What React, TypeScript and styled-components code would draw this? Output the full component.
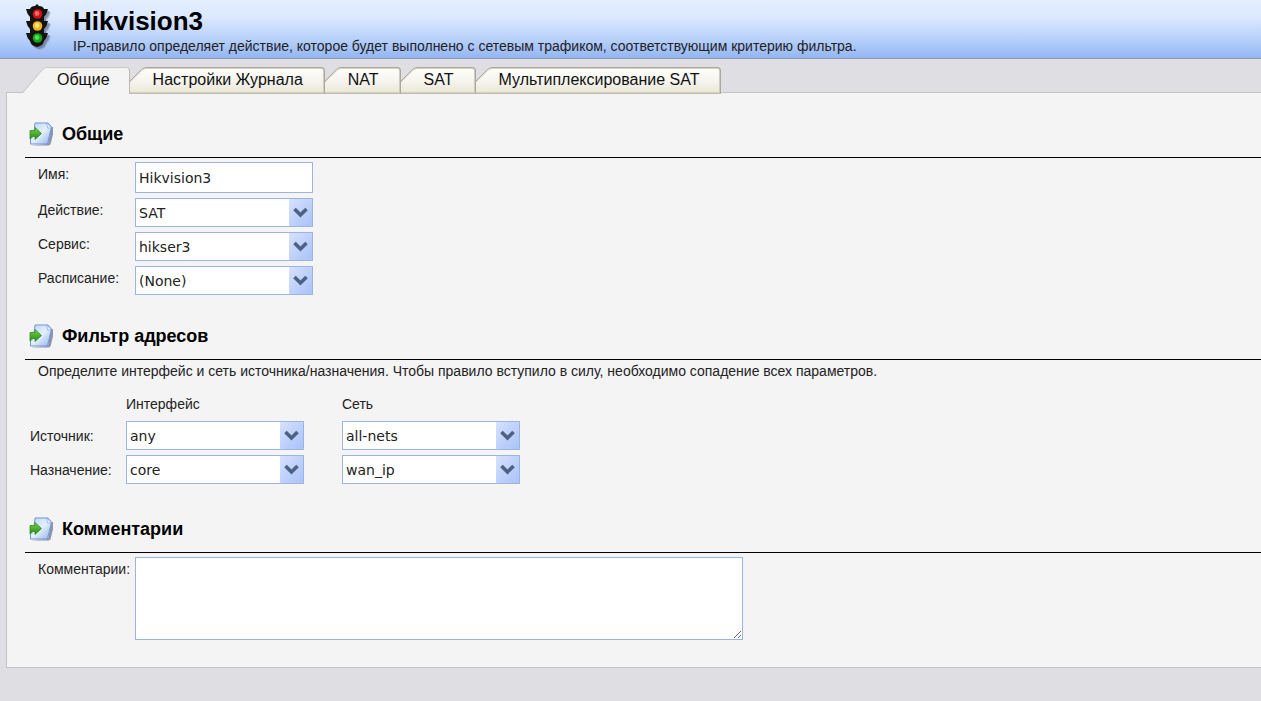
import React, { useState } from "react";
import styled, { createGlobalStyle, css } from "styled-components";

const GlobalStyle = createGlobalStyle`
  * { box-sizing: border-box; }
  body {
    margin: 0;
    background: #dfdee3;
    color: #222;
    font-family: "Liberation Sans", Arial, sans-serif;
    font-size: 14px;
    line-height: 16px;
    overflow-x: hidden;
  }
`;

const Header = styled.header`
  display: flex;
  height: 59px;
  padding: 4px 0 0 24px;
  gap: 21px;
  border-bottom: 1px solid #8f9bb5;
  background: linear-gradient(#e4efff, #dbe8fe 30%, #b5cffb 70%, #94b5f3);
`;

const HeaderText = styled.div`
  display: flex;
  flex-direction: column;
`;

const Title = styled.h1`
  margin: 0;
  color: #000;
  font-size: 26px;
  line-height: 34px;
  font-weight: bold;
`;

const Subtitle = styled.p`
  margin: 0;
`;

const TabBar = styled.nav`
  display: flex;
  padding: 8px 0 0 22px;
  height: 34px;
  margin-bottom: -1px;
  position: relative;
`;

const TabLink = styled.a`
  display: flex;
  height: 27px;
  color: #111;
  font-size: 16px;
  line-height: 24px;
  text-decoration: none;
  white-space: nowrap;
`;

const TabEdge = styled.svg`
  display: block;
  flex: none;
`;

const TabBody = styled.span<{ $active?: boolean }>`
  border-radius: 0 4px 0 0;
  ${(p) =>
    p.$active
      ? css`
          padding: 0 19px 0 11px;
          border-top: 1px solid #c9c9c4;
          border-right: 1px solid #b9b9b0;
          background: #f4f4f4;
        `
      : css`
          padding: 0 21px 0 7px;
          border: solid #aaa89c;
          border-width: 1px 1px 1px 0;
          border-bottom-color: #c0bdae;
          box-shadow: inset -1px 0 #cfcdc2, inset 0 1px #d4d2c8, inset 0 -1px #d3d0c1;
          background: linear-gradient(#fefefc, #f6f5ef 50%, #eae7d6);
        `}
`;

const Panel = styled.main`
  margin-left: 6px;
  padding: 0 0 27px 18px;
  border: solid #c3c3c1;
  border-width: 1px 0 1px 1px;
  background: #f4f4f4;
`;

const SectionHeader = styled.div`
  display: flex;
  gap: 9px;
  padding: 29px 0 11px 4px;
  border-bottom: 1px solid #000;
`;

const SectionTitle = styled.h2`
  margin: 0;
  color: #000;
  font-size: 18px;
  line-height: 24px;
`;

const Fields = styled.div`
  display: flex;
  flex-direction: column;
  gap: 5px;
  padding: 4px 0 0 13px;
`;

const Field = styled.div`
  display: grid;
  grid-template-columns: 97px 1fr;
  align-items: start;
`;

const FieldLabel = styled.label`
  padding-top: 4px;
`;

const control = css`
  margin: 0;
  border: 1px solid #9ab5e4;
  border-radius: 0;
  background: #fff;
  color: #222;
  font-family: "DejaVu Sans", Verdana, sans-serif;
  font-size: 14px;
  outline: none;
`;

const TextInput = styled.input`
  ${control}
  width: 178px;
  height: 31px;
  padding: 0 3px;
`;

const CommentBox = styled.textarea`
  ${control}
  display: block;
  width: 608px;
  height: 83px;
  padding: 3px;
  resize: both;
`;

const SelectFrame = styled.div`
  display: grid;
  width: 178px;
  height: 29px;
  > * {
    grid-area: 1 / 1;
  }
`;

const NativeSelect = styled.select`
  ${control}
  appearance: none;
  width: 100%;
  height: 100%;
  padding: 0 26px 0 3px;
`;

const SelectArrow = styled.svg`
  align-self: center;
  justify-self: end;
  margin-right: 1px;
  pointer-events: none;
  z-index: 1;
`;

const FilterHint = styled.p`
  margin: 0;
  padding: 3px 0 0 13px;
`;

const FilterGrid = styled.div`
  display: grid;
  grid-template-columns: 96px 216px 178px;
  row-gap: 5px;
  align-items: center;
  padding: 17px 0 4px 5px;
`;

const ColumnTitle = styled.span`
  padding-bottom: 4px;
`;

const lamps = [
  { base: "#cf1018", shine: "#ff8f8f", y: 10 },
  { base: "#eeb51c", shine: "#fff2a8", y: 22 },
  { base: "#0fa517", shine: "#7df07d", y: 34 },
];

function TrafficLight() {
  const housing =
    "M13 0l2 2q4 0 5 3h4q-1 5-4 8v4h4q-1 5-4 8v4h4q-1 5-4 8-1 4-4 5l-3 1-3-1q-3-1-4-5-3-3-4-8h4v-4q-3-3-4-8h4v-4Q3 10 2 5h4q1-3 5-3z";
  return (
    <svg width="28" height="48" viewBox="0 0 28 48" aria-hidden="true">
      <path d={housing} fill="#66728c" opacity="0.3" transform="translate(3 3)" />
      <path d={housing} fill="#4c5670" opacity="0.45" transform="translate(2 2)" />
      <path d={housing} fill="#15130f" />
      {lamps.map(({ base, shine, y }) => (
        <g key={y}>
          <circle cx="13.5" cy={y} r="4.8" fill={base} />
          <circle cx="13" cy={y - 0.5} r="2.4" fill={shine} opacity="0.7" />
        </g>
      ))}
    </svg>
  );
}

function SectionIcon() {
  return (
    <svg width="24" height="24" viewBox="0 0 24 24" aria-hidden="true">
      <defs>
        <linearGradient id="sheet" x1="0" y1="0" x2="1" y2="1">
          <stop offset="0" stopColor="#b9d3f6" />
          <stop offset="0.5" stopColor="#e3effd" />
          <stop offset="1" stopColor="#8eb1e8" />
        </linearGradient>
        <linearGradient id="arrow" x1="0" y1="0" x2="0" y2="1">
          <stop offset="0" stopColor="#7fd24a" />
          <stop offset="1" stopColor="#1f8a12" />
        </linearGradient>
      </defs>
      <path d="M2 23.5h17.500l2-1L25 8V5h-3l-3 17z" fill="#5d6c90" opacity="0.7" />
      <path d="M6 1h13l3.500 4-4 17H1.500V15L5 10z" fill="url(#sheet)" stroke="#7395cf" />
      <path d="M17.500 1l1 5h4z" fill="#f4f9ff" stroke="#7da2dc" strokeWidth="0.7" />
      <path d="M1 8.500h5V5.500l6.500 6L6 17.500V14.500H4L1 17z" fill="url(#arrow)" stroke="#2f8d20" strokeWidth="0.8" />
    </svg>
  );
}

function Select({ id, value, label }: { id: string; value: string; label?: string }) {
  return (
    <SelectFrame>
      <NativeSelect id={id} defaultValue={value} aria-label={label}>
        <option>{value}</option>
      </NativeSelect>
      <SelectArrow width="23" height="27" viewBox="0 0 23 27" aria-hidden="true">
        <defs>
          <linearGradient id="drop" x1="0" y1="0" x2="1" y2="1">
            <stop offset="0" stopColor="#d6e1fd" />
            <stop offset="0.5" stopColor="#c0d2fb" />
            <stop offset="1" stopColor="#a9c2f7" />
          </linearGradient>
        </defs>
        <rect width="23" height="27" rx="1" fill="url(#drop)" />
        <path d="M5.500 10l6 6 6-6" fill="none" stroke="#4d6185" strokeWidth="3.6" />
      </SelectArrow>
    </SelectFrame>
  );
}

function Tab({ label, active }: { label: string; active?: boolean }) {
  return (
    <TabLink href="#" aria-current={active ? "page" : undefined}>
      {active ? (
        <TabEdge width="24" height="27" viewBox="0 0 24 27" aria-hidden="true">
          <path d="M0 27L2 25 18 5.500Q22 .5 24 .5V27z" fill="#f4f4f4" />
          <path d="M0 25.500L2 24 18 5.500Q22 .5 24 .5" fill="none" stroke="#c6c6c0" />
        </TabEdge>
      ) : (
        <TabEdge width="16" height="27" viewBox="0 0 16 27" aria-hidden="true">
          <defs>
            <linearGradient id="tab" x1="0" y1="0" x2="0" y2="1">
              <stop offset="0" stopColor="#fefefc" />
              <stop offset="0.5" stopColor="#f6f5ef" />
              <stop offset="1" stopColor="#eae7d6" />
            </linearGradient>
          </defs>
          <path d="M0 14L10 4Q13 .5 16 .5V27H0z" fill="url(#tab)" />
          <path d="M0 15L11 4.500Q13 1.500 16 1.500" fill="none" stroke="#d4d2c8" />
          <path d="M0 14L10 4Q13 .5 16 .5" fill="none" stroke="#aaa89c" />
          <path d="M0 25.500H16" stroke="#d3d0c1" />
          <path d="M0 26.500H16" stroke="#c0bdae" />
        </TabEdge>
      )}
      <TabBody $active={active}>{label}</TabBody>
    </TabLink>
  );
}

function Heading({ children }: { children: string }) {
  return (
    <SectionHeader>
      <SectionIcon />
      <SectionTitle>{children}</SectionTitle>
    </SectionHeader>
  );
}

export default function App() {
  const [name, setName] = useState("Hikvision3");
  return (
    <>
      <GlobalStyle />
      <Header>
        <TrafficLight />
        <HeaderText>
          <Title>Hikvision3</Title>
          <Subtitle>
            IP-правило определяет действие, которое будет выполнено с сетевым трафиком, соответствующим критерию фильтра.
          </Subtitle>
        </HeaderText>
      </Header>
      <TabBar>
        <Tab label="Общие" active />
        <Tab label="Настройки Журнала" />
        <Tab label="NAT" />
        <Tab label="SAT" />
        <Tab label="Мультиплексирование SAT" />
      </TabBar>
      <Panel>
        <section>
          <Heading>Общие</Heading>
          <Fields>
            <Field>
              <FieldLabel htmlFor="name">Имя:</FieldLabel>
              <TextInput id="name" value={name} onChange={(e) => setName(e.target.value)} />
            </Field>
            <Field>
              <FieldLabel htmlFor="action">Действие:</FieldLabel>
              <Select id="action" value="SAT" />
            </Field>
            <Field>
              <FieldLabel htmlFor="service">Сервис:</FieldLabel>
              <Select id="service" value="hikser3" />
            </Field>
            <Field>
              <FieldLabel htmlFor="schedule">Расписание:</FieldLabel>
              <Select id="schedule" value="(None)" />
            </Field>
          </Fields>
        </section>
        <section>
          <Heading>Фильтр адресов</Heading>
          <FilterHint>
            Определите интерфейс и сеть источника/назначения. Чтобы правило вступило в силу, необходимо сопадение всех
            параметров.
          </FilterHint>
          <FilterGrid>
            <span />
            <ColumnTitle>Интерфейс</ColumnTitle>
            <ColumnTitle>Сеть</ColumnTitle>
            <label htmlFor="src-if">Источник:</label>
            <Select id="src-if" value="any" />
            <Select id="src-net" value="all-nets" label="Источник, сеть" />
            <label htmlFor="dst-if">Назначение:</label>
            <Select id="dst-if" value="core" />
            <Select id="dst-net" value="wan_ip" label="Назначение, сеть" />
          </FilterGrid>
        </section>
        <section>
          <Heading>Комментарии</Heading>
          <Fields>
            <Field>
              <FieldLabel htmlFor="comments">Комментарии:</FieldLabel>
              <CommentBox id="comments" />
            </Field>
          </Fields>
        </section>
      </Panel>
    </>
  );
}
